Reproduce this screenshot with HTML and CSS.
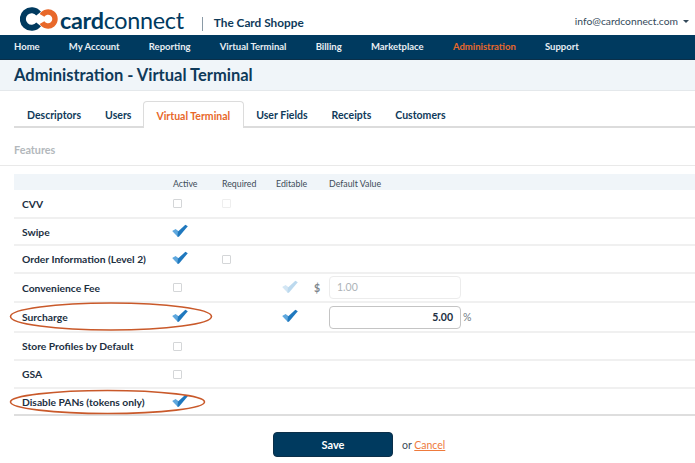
FILE: index.html
```html
<!DOCTYPE html>
<html lang="en">
<head>
<meta charset="utf-8">
<title>Administration - Virtual Terminal</title>
<link rel="stylesheet" href="styles.css">
</head>
<body>
<svg width="0" height="0" class="defs">
  <symbol id="check" viewBox="0 0 16 14">
    <path class="chk-l" d="M0.2 7 L3.6 4.9 L6.6 7.2 L6.4 12.6 L5.4 12.6 Z"/>
    <path class="chk-r" d="M6 7.6 L13.4 0.8 L15.8 2.2 L6.9 12.8 L5.4 12.8 Z"/>
  </symbol>
</svg>
<header class="top">
  <div class="brand">
    <svg class="mark" width="39" height="26" viewBox="0 0 39 26">
      <path d="M18.6 7.6 A8.8 8.8 0 1 0 18.6 18.4" fill="none" stroke="#003a5f" stroke-width="6"/>
      <path d="M22 9.4 A7 7 0 1 1 22 16.6" fill="none" stroke="#e8682a" stroke-width="5.4"/>
    </svg>
    <span class="wordmark"><b>card</b>connect</span>
    <span class="divider"></span>
    <span class="shop">The Card Shoppe</span>
  </div>
  <div class="account">info@cardconnect.com<span class="caret"></span></div>
</header>
<nav class="nav">
  <a>Home</a><a>My Account</a><a>Reporting</a><a>Virtual Terminal</a><a>Billing</a><a>Marketplace</a><a class="current">Administration</a><a>Support</a>
</nav>
<div class="band"><h1>Administration - Virtual Terminal</h1></div>
<div class="tabs">
  <a>Descriptors</a><a>Users</a><a class="active">Virtual Terminal</a><a>User Fields</a><a>Receipts</a><a>Customers</a>
</div>
<h2 class="features">Features</h2>
<div class="table">
  <div class="row r-head"><span></span><span>Active</span><span>Required</span><span>Editable</span><span>Default Value</span></div>
  <div class="row r-29"><b>CVV</b><i class="box"></i><i class="box faint"></i></div>
  <div class="row r-27"><b>Swipe</b><svg class="chk"><use href="#check"/></svg></div>
  <div class="row r-28"><b>Order Information (Level 2)</b><svg class="chk"><use href="#check"/></svg><i class="box"></i></div>
  <div class="row r-29"><b>Convenience Fee</b><i class="box"></i><span></span><svg class="chk light edit"><use href="#check"/></svg>
    <div class="value"><span class="unit-left">$</span><div class="input disabled">1.00</div></div></div>
  <div class="row r-30"><b>Surcharge</b><svg class="chk"><use href="#check"/></svg><span></span><svg class="chk edit"><use href="#check"/></svg>
    <div class="value"><div class="input filled">5.00</div><span class="unit-right">%</span></div></div>
  <div class="row r-28"><b>Store Profiles by Default</b><i class="box"></i></div>
  <div class="row r-28"><b>GSA</b><i class="box"></i></div>
  <div class="row r-27 last"><b>Disable PANs (tokens only)</b><svg class="chk"><use href="#check"/></svg></div>
</div>
<div class="actions"><button class="save">Save</button><span class="or">or <a>Cancel</a></span></div>
<svg class="ovals" width="695" height="463" viewBox="0 0 695 463">
  <ellipse cx="111" cy="316.5" rx="100.5" ry="13.5"/>
  <ellipse cx="107.5" cy="402" rx="97" ry="11.5"/>
</svg>
</body>
</html>
```
FILE: styles.css
```css
* { box-sizing: border-box; }
html, body { margin: 0; height: 463px; overflow: hidden; }
body { position: relative; background: #fff; font-family: Lato, sans-serif; color: #1c2f3f; }
.defs { position: absolute; }
.top { height: 35px; display: flex; justify-content: space-between; padding: 6px 6px 0 20px; }
.brand { display: flex; align-items: flex-start; }
.mark { display: block; }
.wordmark { font-size: 23.4px; line-height: 29px; color: #003a5f; margin-left: 1px; letter-spacing: -0.3px; }
.wordmark b { font-weight: 700; }
.divider { width: 1px; height: 14px; background: #8a9aa6; margin: 11px 11px 0 18px; }
.shop { font-size: 11.8px; font-weight: 700; color: #0f3a5a; margin-top: 9px; line-height: 16px; }
.account { font-size: 10.3px; line-height: 14px; color: #33495a; margin-top: 8px; height: 14px; display: flex; align-items: center; }
.caret { width: 0; height: 0; border: 3px solid transparent; border-top: 3px solid #33495a; border-bottom: 0; margin-left: 5px; margin-top: 1px; }
.nav { height: 25px; background: #003a5f; border-bottom: 1px solid #0b2f49; display: flex; padding-left: 14px; gap: 29.2px; align-items: center; }
.nav a { font-size: 9.5px; font-weight: 700; color: #e8eef3; line-height: 14px; }
.nav a.current { color: #e8682a; }
.band { height: 31px; background: #f0f5f9; border-bottom: 1px solid #e4e8eb; padding: 5px 14px 0; }
h1 { margin: 0; font-size: 16.5px; line-height: 20px; font-weight: 700; color: #0f3a5a; }
.tabs { margin: 10px 0 0 14px; height: 27px; border-bottom: 2px solid #dcdcdc; display: flex; align-items: flex-start; padding-left: 13px; gap: 24px; font-size: 10.5px; font-weight: 700; color: #0f3a5a; }
.tabs a { line-height: 14px; padding-top: 7px; }
.tabs a.active { margin: 0 -12px; height: 27px; padding: 7px 13px 0 12px; background: #fff; border: 1px solid #dcdcdc; border-bottom: 0; border-radius: 4px 4px 0 0; color: #e8682a; }
.features { margin: 0; padding: 15px 0 0 14px; font-size: 10.8px; line-height: 14px; font-weight: 700; color: #b3b8bc; height: 38px; border-bottom: 1px solid #e9e9e9; }
.table { margin: 8px 0 0 14px; }
.row { display: grid; grid-template-columns: 151px 49px 54px 53px 1fr; align-items: center; padding-left: 8px; border-bottom: 2px solid #f0f0f0; font-size: 10.3px; color: #1c2f3f; }
.row b { font-weight: 700; }
.row.last { border-bottom-color: #dedede; }
.r-head { height: 16px; background: #f0f5f9; border-bottom: 0; font-size: 8.8px; color: #3d4c58; padding-top: 2px; }
.r-27 { height: 27px; }
.r-28 { height: 28px; }
.r-29 { height: 29px; }
.r-30 { height: 30px; }
.box { display: block; width: 9px; height: 9px; border: 1px solid #d4d6d8; border-radius: 1px; background: #fff; }
.box.faint { border-color: #eeeeee; }
.chk { width: 16px; height: 14px; display: block; margin-left: -1px; margin-top: -2px; --l: #5fa8de; --r: #1f78be; }
.chk.edit { margin-left: 6px; }
.chk.light { --l: #d3e6f4; --r: #bcd9ee; }
.chk-l { fill: var(--l); }
.chk-r { fill: var(--r); }
.value { position: relative; display: flex; align-items: center; width: 132px; height: 23px; }
.input { width: 132px; height: 23px; border-radius: 4px; font-size: 10.5px; line-height: 21px; padding: 0 7px; background: #fff; }
.input.disabled { border: 1px solid #ececec; color: #adb3b8; }
.input.filled { border: 1px solid #c4c4c4; text-align: right; font-weight: 700; color: #1c2f3f; }
.unit-left { position: absolute; left: -15px; font-size: 10.5px; font-weight: 700; color: #7d868d; }
.unit-right { position: absolute; left: 134px; font-size: 10.5px; color: #6f7a83; }
.actions { display: flex; align-items: center; margin-top: 16px; padding-left: 273px; }
.save { width: 120px; height: 25px; background: #003a5f; border: 1px solid #0b2f49; border-radius: 4px; color: #fff; font: 700 11px/1 Lato, sans-serif; padding: 0; }
.or { font-size: 10.5px; margin-left: 9px; color: #3d4c58; }
.or a { color: #ee7a3c; text-decoration: underline; }
.ovals { position: absolute; left: 0; top: 0; pointer-events: none; }
.ovals ellipse { fill: none; stroke: #c9592a; stroke-width: 1.6; }
```
